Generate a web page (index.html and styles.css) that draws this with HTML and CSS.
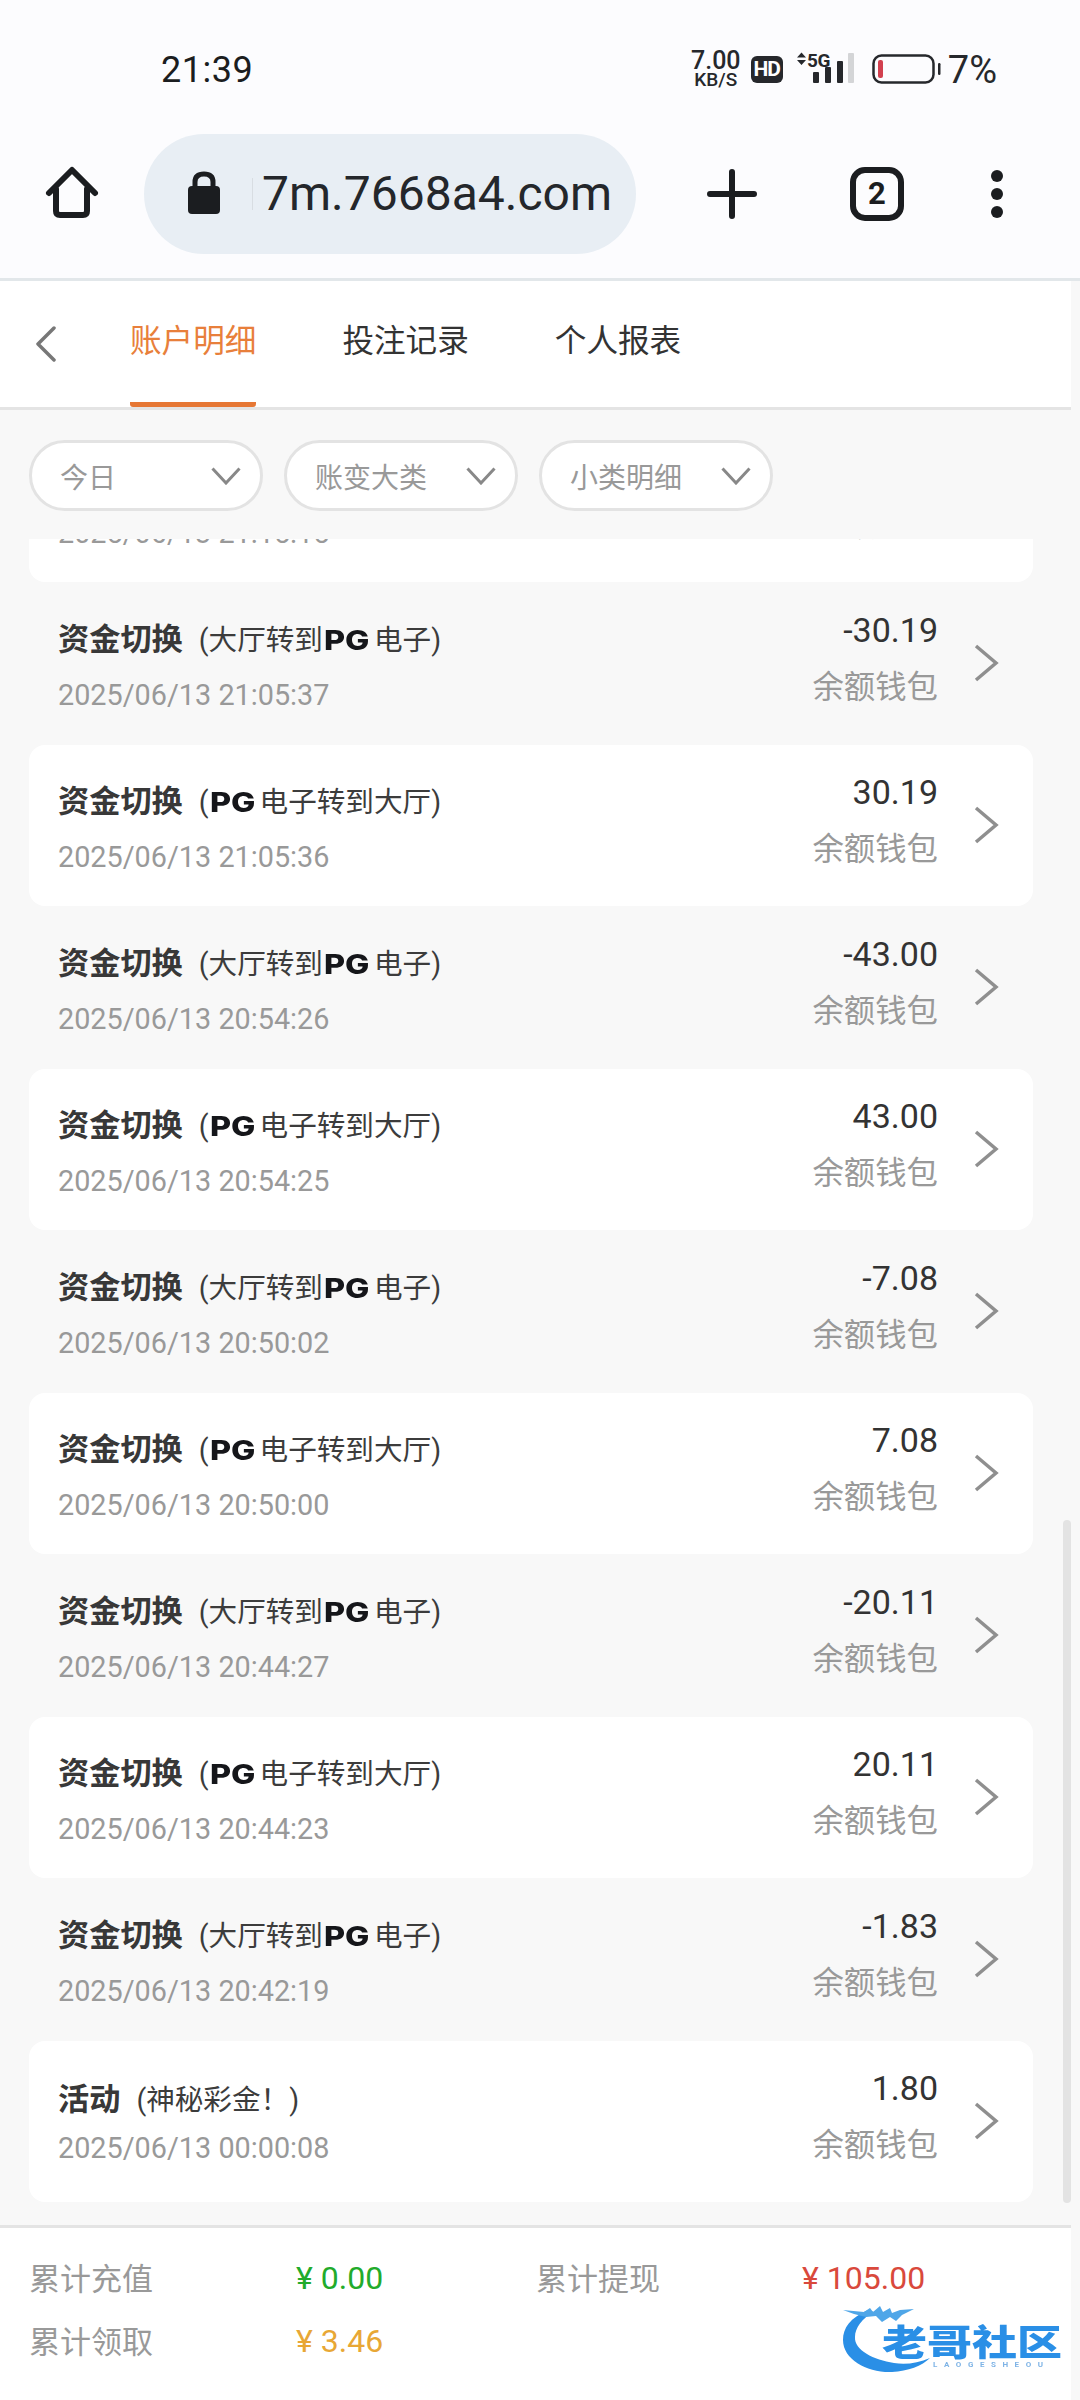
FILE: index.html
```html
<!DOCTYPE html>
<html lang="zh-CN">
<head>
<meta charset="utf-8">
<title>账户明细</title>
<link rel="stylesheet" href="styles.css">
</head>
<body>
<div class="screen">
  <header class="chrome">
    <div class="status">
      <span class="time">21:39</span>
      <div class="status-right">
        <span class="speed"><b>7.00</b><i>KB/S</i></span>
        <span class="hd">HD</span>
        <svg class="signal" width="60" height="34" viewBox="0 0 60 34">
          <path d="M1 6.500 L5.500 1.500 L10 6.500Z M1 9 L5.500 14 L10 9Z" fill="#26282c"/>
          <text x="11" y="16" class="fiveg">5G</text>
          <rect x="17" y="21" width="6" height="11" rx="1" fill="#26282c"/>
          <rect x="29" y="16" width="6" height="16" rx="1" fill="#26282c"/>
          <rect x="41" y="10" width="6" height="22" rx="1" fill="#26282c"/>
          <rect x="52" y="2" width="6" height="30" rx="1" fill="#d4d5d7"/>
        </svg>
        <svg class="battery" width="69" height="30" viewBox="0 0 69 30">
          <rect x="1.500" y="1.500" width="60" height="27" rx="8" fill="none" stroke="#26282c" stroke-width="2.500"/>
          <rect x="6" y="6" width="5" height="18" rx="2" fill="#d2404f"/>
          <rect x="66" y="9" width="2.500" height="12" rx="1.200" fill="#26282c"/>
        </svg>
        <span class="pct">7%</span>
      </div>
    </div>
    <div class="toolbar">
      <svg class="home" width="64" height="64" viewBox="0 0 64 64">
        <path d="M8 30 L31 7 L54 30 M15 26 V48 Q15 52 19 52 H42 Q46 52 46 48 V26" fill="none" stroke="#1b1d20" stroke-width="6" stroke-linecap="round" stroke-linejoin="round"/>
      </svg>
      <div class="omnibox">
        <svg class="lock" width="34" height="44" viewBox="0 0 34 44">
          <path d="M8 17 V11 Q8 3 17 3 Q26 3 26 11 V17" fill="none" stroke="#1b1d20" stroke-width="5"/>
          <rect x="1" y="15" width="32" height="28" rx="4" fill="#1b1d20"/>
        </svg>
        <span class="divider"></span>
        <span class="url">7m.7668a4.com</span>
      </div>
      <svg class="plus" width="50" height="50" viewBox="0 0 50 50">
        <path d="M25 3 V47 M3 25 H47" stroke="#1b1d20" stroke-width="6" stroke-linecap="round"/>
      </svg>
      <span class="tabs-count">2</span>
      <svg class="dots" width="14" height="50" viewBox="0 0 14 50">
        <circle cx="7" cy="7" r="6" fill="#1b1d20"/><circle cx="7" cy="25" r="6" fill="#1b1d20"/><circle cx="7" cy="43" r="6" fill="#1b1d20"/>
      </svg>
    </div>
  </header>

  <div class="page">
    <main class="content">
      <nav class="tabbar">
        <svg class="back" width="22" height="36" viewBox="0 0 22 36">
          <path d="M19 2 L3 18 L19 34" fill="none" stroke="#777" stroke-width="3.500" stroke-linecap="round" stroke-linejoin="round"/>
        </svg>
        <a class="tab tab-on">账户明细</a>
        <a class="tab">投注记录</a>
        <a class="tab">个人报表</a>
      </nav>

      <div class="filters">
        <div class="pill pill-a"><span>今日</span><svg width="30" height="18" viewBox="0 0 30 18"><path d="M1.500 1.500 L15 16 L28.500 1.500" fill="none" stroke="#888" stroke-width="3"/></svg></div>
        <div class="pill"><span>账变大类</span><svg width="30" height="18" viewBox="0 0 30 18"><path d="M1.500 1.500 L15 16 L28.500 1.500" fill="none" stroke="#888" stroke-width="3"/></svg></div>
        <div class="pill"><span>小类明细</span><svg width="30" height="18" viewBox="0 0 30 18"><path d="M1.500 1.500 L15 16 L28.500 1.500" fill="none" stroke="#888" stroke-width="3"/></svg></div>
      </div>

      <div class="viewport">
        <div class="list">
          <div class="row row-white row-clipped">
            <div class="left"><div class="title logo-row"><b>资金切换</b><span class="detail">(大厅转到<em>PG</em>电子)</span></div><div class="date">2025/06/13 21:15:15</div></div>
            <div class="right"><div class="amount">1.00</div><div class="wallet">余额钱包</div></div>
            <svg class="arrow" width="26" height="38" viewBox="0 0 26 38"><path d="M3 2 L23 19 L3 36" fill="none" stroke="#8f8f8f" stroke-width="3.500"/></svg>
          </div>
          <div class="row">
            <div class="left"><div class="title logo-row"><b>资金切换</b><span class="detail">(大厅转到<em>PG</em>电子)</span></div><div class="date">2025/06/13 21:05:37</div></div>
            <div class="right"><div class="amount">-30.19</div><div class="wallet">余额钱包</div></div>
            <svg class="arrow" width="26" height="38" viewBox="0 0 26 38"><path d="M3 2 L23 19 L3 36" fill="none" stroke="#8f8f8f" stroke-width="3.500"/></svg>
          </div>
          <div class="row row-white">
            <div class="left"><div class="title logo-row"><b>资金切换</b><span class="detail">(<em>PG</em>电子转到大厅)</span></div><div class="date">2025/06/13 21:05:36</div></div>
            <div class="right"><div class="amount">30.19</div><div class="wallet">余额钱包</div></div>
            <svg class="arrow" width="26" height="38" viewBox="0 0 26 38"><path d="M3 2 L23 19 L3 36" fill="none" stroke="#8f8f8f" stroke-width="3.500"/></svg>
          </div>
          <div class="row">
            <div class="left"><div class="title logo-row"><b>资金切换</b><span class="detail">(大厅转到<em>PG</em>电子)</span></div><div class="date">2025/06/13 20:54:26</div></div>
            <div class="right"><div class="amount">-43.00</div><div class="wallet">余额钱包</div></div>
            <svg class="arrow" width="26" height="38" viewBox="0 0 26 38"><path d="M3 2 L23 19 L3 36" fill="none" stroke="#8f8f8f" stroke-width="3.500"/></svg>
          </div>
          <div class="row row-white">
            <div class="left"><div class="title logo-row"><b>资金切换</b><span class="detail">(<em>PG</em>电子转到大厅)</span></div><div class="date">2025/06/13 20:54:25</div></div>
            <div class="right"><div class="amount">43.00</div><div class="wallet">余额钱包</div></div>
            <svg class="arrow" width="26" height="38" viewBox="0 0 26 38"><path d="M3 2 L23 19 L3 36" fill="none" stroke="#8f8f8f" stroke-width="3.500"/></svg>
          </div>
          <div class="row">
            <div class="left"><div class="title logo-row"><b>资金切换</b><span class="detail">(大厅转到<em>PG</em>电子)</span></div><div class="date">2025/06/13 20:50:02</div></div>
            <div class="right"><div class="amount">-7.08</div><div class="wallet">余额钱包</div></div>
            <svg class="arrow" width="26" height="38" viewBox="0 0 26 38"><path d="M3 2 L23 19 L3 36" fill="none" stroke="#8f8f8f" stroke-width="3.500"/></svg>
          </div>
          <div class="row row-white">
            <div class="left"><div class="title logo-row"><b>资金切换</b><span class="detail">(<em>PG</em>电子转到大厅)</span></div><div class="date">2025/06/13 20:50:00</div></div>
            <div class="right"><div class="amount">7.08</div><div class="wallet">余额钱包</div></div>
            <svg class="arrow" width="26" height="38" viewBox="0 0 26 38"><path d="M3 2 L23 19 L3 36" fill="none" stroke="#8f8f8f" stroke-width="3.500"/></svg>
          </div>
          <div class="row">
            <div class="left"><div class="title logo-row"><b>资金切换</b><span class="detail">(大厅转到<em>PG</em>电子)</span></div><div class="date">2025/06/13 20:44:27</div></div>
            <div class="right"><div class="amount">-20.11</div><div class="wallet">余额钱包</div></div>
            <svg class="arrow" width="26" height="38" viewBox="0 0 26 38"><path d="M3 2 L23 19 L3 36" fill="none" stroke="#8f8f8f" stroke-width="3.500"/></svg>
          </div>
          <div class="row row-white">
            <div class="left"><div class="title logo-row"><b>资金切换</b><span class="detail">(<em>PG</em>电子转到大厅)</span></div><div class="date">2025/06/13 20:44:23</div></div>
            <div class="right"><div class="amount">20.11</div><div class="wallet">余额钱包</div></div>
            <svg class="arrow" width="26" height="38" viewBox="0 0 26 38"><path d="M3 2 L23 19 L3 36" fill="none" stroke="#8f8f8f" stroke-width="3.500"/></svg>
          </div>
          <div class="row">
            <div class="left"><div class="title logo-row"><b>资金切换</b><span class="detail">(大厅转到<em>PG</em>电子)</span></div><div class="date">2025/06/13 20:42:19</div></div>
            <div class="right"><div class="amount">-1.83</div><div class="wallet">余额钱包</div></div>
            <svg class="arrow" width="26" height="38" viewBox="0 0 26 38"><path d="M3 2 L23 19 L3 36" fill="none" stroke="#8f8f8f" stroke-width="3.500"/></svg>
          </div>
          <div class="row row-white">
            <div class="left"><div class="title"><b>活动</b><span class="detail">(神秘彩金！)</span></div><div class="date">2025/06/13 00:00:08</div></div>
            <div class="right"><div class="amount">1.80</div><div class="wallet">余额钱包</div></div>
            <svg class="arrow" width="26" height="38" viewBox="0 0 26 38"><path d="M3 2 L23 19 L3 36" fill="none" stroke="#8f8f8f" stroke-width="3.500"/></svg>
          </div>
        </div>
        <span class="scrollbar"></span>
      </div>

      <footer class="summary">
        <span class="label">累计充值</span><span class="value green"><i>¥</i>0.00</span>
        <span class="label">累计提现</span><span class="value red"><i>¥</i>105.00</span>
        <span class="label">累计领取</span><span class="value gold"><i>¥</i>3.46</span>
        <svg class="watermark" width="230" height="76" viewBox="0 0 230 76">
          <path d="M28 10 C10 18 3 28 3 40 C3 60 28 73 52 72 C68 71 82 66 90 58 C78 63 66 65 54 63 C34 60 14 50 15 37 C15 28 22 18 34 12 Z" fill="#2a8fe6"/>
          <path d="M3 10 L24 12 L30 8 L33 12 L40 6 L43 12 L50 8 L52 13 L60 10 L74 9 L62 15 L56 21 L50 17 L42 22 L36 16 L26 17 L14 14 Z" fill="#4fa6e8"/>
          <text x="42" y="56" class="wm-cn" textLength="180" lengthAdjust="spacingAndGlyphs">老哥社区</text>
          <text x="93" y="67" class="wm-en" textLength="110">LAOGESHEOU</text>
        </svg>
      </footer>
    </main>
    <div class="edge"></div>
  </div>
</div>
</body>
</html>
```

FILE: styles.css
```css
* { box-sizing: border-box; }
html, body { margin: 0; padding: 0; }
body {
  width: 1080px;
  height: 2400px;
  overflow: hidden;
  background: #f8f8f8;
  font-family: Roboto, "Noto Sans CJK SC", sans-serif;
}
.screen { display: flex; flex-direction: column; height: 2400px; }

/* browser chrome */
.chrome {
  flex: none;
  height: 281px;
  background: #fcfcfe;
  border-bottom: 3px solid #e2e7ea;
}
.status {
  height: 134px;
  display: flex;
  justify-content: space-between;
  padding: 48px 83px 0 161px;
  color: #1b1d20;
}
.time { font-size: 36px; line-height: 44px; font-weight: 400; letter-spacing: .5px; }
.status-right { display: flex; align-items: flex-start; height: 44px; }
.speed {
  display: flex; flex-direction: column; align-items: center;
  width: 50px; margin-top: 2px; color: #26282c;
}
.speed b { font-size: 25px; line-height: 21px; font-weight: 500; }
.speed i { font-size: 19px; line-height: 17px; font-style: normal; font-weight: 500; }
.hd {
  width: 32px; height: 27px; margin: 8px 0 0 10px;
  border-radius: 6px; background: #26282c; color: #fff;
  font-size: 21px; font-weight: 700; line-height: 27px; text-align: center;
  letter-spacing: -1px;
}
.signal { margin: 3px 0 0 13px; }
.fiveg { font: 700 19px Roboto, sans-serif; fill: #26282c; letter-spacing: -.5px; }
.battery { margin: 6px 0 0 16px; }
.pct { font-size: 38px; line-height: 44px; margin: 0 0 0 7px; color: #26282c; }

.toolbar { height: 120px; display: flex; align-items: center; position: relative; }
.home { margin-left: 41px; margin-top: 2px; }
.omnibox {
  width: 492px; height: 120px; margin-left: 39px;
  border-radius: 60px; background: #e8eef4;
  display: flex; align-items: center;
}
.lock { margin-left: 43px; margin-top: -2px; }
.divider { width: 1px; height: 32px; margin-left: 31px; background: #d8dde2; }
.url { margin-left: 9px; font-size: 48px; color: #24272b; line-height: 56px; white-space: nowrap; }
.plus { margin-left: 71px; }
.tabs-count {
  width: 54px; height: 54px; margin-left: 93px;
  border: 6px solid #1b1d20; border-radius: 15px;
  font-size: 31px; line-height: 42px; font-weight: 700; text-align: center; color: #1b1d20;
}
.dots { margin-left: 86px; }

/* page */
.page { flex: 1; display: flex; min-height: 0; }
.content { width: 1071px; display: flex; flex-direction: column; position: relative; background: #f8f8f8; }
.edge { width: 9px; background: #f8f8f8; }

.tabbar {
  flex: none; height: 129px; background: #fff;
  border-bottom: 3px solid #e4e4e4;
  display: flex; align-items: flex-start; position: relative;
}
.back { margin: 45px 0 0 35px; }
.tab {
  display: block; height: 126px;
  margin-left: 86px;
  font-size: 31.6px; line-height: 46px; padding-top: 38px;
  color: #333; white-space: nowrap;
}
.tab-on { margin-left: 73px; color: #e87f3b; border-bottom: 5px solid #e67734; border-radius: 0 0 3px 3px; }

.filters { flex: none; height: 129px; display: flex; gap: 21px; padding: 30px 0 0 29px; }
.pill {
  width: 234px; height: 71px;
  border: 3px solid #e3e3e3; border-radius: 36px; background: #fff;
  display: flex; align-items: center; justify-content: space-between;
  padding: 0 19px 0 28px;
  font-size: 28px; color: #999;
}
.pill svg { flex: none; }

.viewport { flex: 1; min-height: 0; overflow: hidden; position: relative; }
.list { margin-top: -118px; padding: 0 38px 0 29px; }
.row {
  height: 162px; display: flex; align-items: flex-start;
  position: relative; border-radius: 16px;
  padding-left: 29px;
}
.row-white { background: #fff; height: 161px; margin-bottom: 1px; }
.left { flex: 1; min-width: 0; padding-top: 33px; }
.title { height: 40px; line-height: 40px; margin-top: 6px; color: #383838; display: flex; align-items: center; white-space: nowrap; }
.title b { font-size: 31.2px; font-weight: 700; }
.detail { font-size: 28.6px; margin-left: 16px; color: #3c3c3c; }
.detail em {
  display: inline-block; width: 47px;
  font: 800 27px/1 Inter, sans-serif; font-style: normal; color: #15161a;
  white-space: nowrap;
  transform: scaleX(1.2); transform-origin: left center;
  margin: 0 3px 0 1px;
}
.date { margin-top: 11px; font-size: 28.8px; line-height: 34px; color: #999; white-space: nowrap; }
.logo-row + .date { margin-top: 18px; }
.logo-row { margin-top: 4px; }
.right { flex: none; text-align: right; width: 220px; padding-top: 25px; }
.amount { font-size: 34px; line-height: 44px; color: #333; }
.wallet { margin-top: 14px; font-size: 31.4px; line-height: 44px; color: #999; }
.arrow { margin: 61px 34px 0 35px; flex: none; }

.scrollbar {
  position: absolute; right: 0; top: 981px;
  width: 8px; height: 683px;
  border-radius: 4px; background: #e3e3e3;
}

.summary {
  flex: none; height: 175px; position: relative;
  background: #fff; border-top: 3px solid #e4e4e4;
  display: grid;
  grid-template-columns: 267px 240px 266px 1fr;
  grid-auto-rows: 63px;
  padding: 17px 0 0 29px;
  align-items: center;
  font-size: 31px;
}
.label { color: #999; }
.value { white-space: nowrap; font-size: 32px; padding-top: 2px; }
.value i { font-style: normal; margin-right: 8px; }
.green { color: #22ab2b; }
.red { color: #d9493c; }
.gold { color: #e8a735; }
.watermark { position: absolute; left: 840px; top: 72px; filter: blur(.5px); }
.wm-cn { font: 900 36px "Noto Sans CJK SC", sans-serif; fill: #2a8fe6; }
.wm-en { font: 700 8px Roboto, sans-serif; fill: #7fb4e6; }
```
